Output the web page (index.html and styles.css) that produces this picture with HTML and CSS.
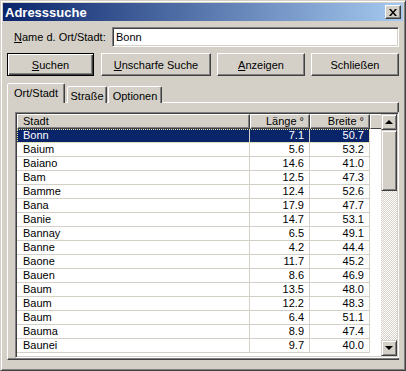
FILE: index.html
```html
<!DOCTYPE html>
<html lang="de">

<head>
    <meta charset="UTF-8" />
    <title>Adresssuche</title>
    <link rel="stylesheet" href="styles.css">
</head>

<body>

    <div class="window">
        <div class="titlebar">
            <span class="title">Adresssuche</span>
            <button class="close-btn">
                <svg width="8" height="7" viewBox="0 0 8 7">
                    <path d="M0 0h2l2 2.5L6 0h2L5 3.5 8 7H6L4 4.5 2 7H0l3-3.5z" fill="#000" />
                </svg>
            </button>
        </div>

        <div class="content">
            <div class="name-row">
                <label class="name-label"><u>N</u>ame d. Ort/Stadt:</label>
                <input class="name-input" type="text" value="Bonn">
            </div>

            <div class="button-row">
                <button class="btn default w-suchen"><u>S</u>uchen</button>
                <button class="btn w-unscharf"><u>U</u>nscharfe Suche</button>
                <button class="btn w-anzeigen"><u>A</u>nzeigen</button>
                <button class="btn w-schliessen">Schließen</button>
            </div>

            <div class="tabs">
                <div class="tab active">Ort/Stadt</div>
                <div class="tab t-strasse">Straße</div>
                <div class="tab t-optionen">Optionen</div>
            </div>

            <div class="panel">
                <div class="list">
                    <div class="grid">
                        <div class="header">
                            <div class="hcell c-stadt">Stadt</div>
                            <div class="hcell c-num">Länge °</div>
                            <div class="hcell c-num">Breite °</div>
                            <div class="hcell c-fill"></div>
                        </div>
                        <div class="row selected"><div class="cell c-stadt">Bonn</div><div class="cell c-num">7.1</div><div class="cell c-num">50.7</div></div>
                        <div class="row"><div class="cell c-stadt">Baium</div><div class="cell c-num">5.6</div><div class="cell c-num">53.2</div></div>
                        <div class="row"><div class="cell c-stadt">Baiano</div><div class="cell c-num">14.6</div><div class="cell c-num">41.0</div></div>
                        <div class="row"><div class="cell c-stadt">Bam</div><div class="cell c-num">12.5</div><div class="cell c-num">47.3</div></div>
                        <div class="row"><div class="cell c-stadt">Bamme</div><div class="cell c-num">12.4</div><div class="cell c-num">52.6</div></div>
                        <div class="row"><div class="cell c-stadt">Bana</div><div class="cell c-num">17.9</div><div class="cell c-num">47.7</div></div>
                        <div class="row"><div class="cell c-stadt">Banie</div><div class="cell c-num">14.7</div><div class="cell c-num">53.1</div></div>
                        <div class="row"><div class="cell c-stadt">Bannay</div><div class="cell c-num">6.5</div><div class="cell c-num">49.1</div></div>
                        <div class="row"><div class="cell c-stadt">Banne</div><div class="cell c-num">4.2</div><div class="cell c-num">44.4</div></div>
                        <div class="row"><div class="cell c-stadt">Baone</div><div class="cell c-num">11.7</div><div class="cell c-num">45.2</div></div>
                        <div class="row"><div class="cell c-stadt">Bauen</div><div class="cell c-num">8.6</div><div class="cell c-num">46.9</div></div>
                        <div class="row"><div class="cell c-stadt">Baum</div><div class="cell c-num">13.5</div><div class="cell c-num">48.0</div></div>
                        <div class="row"><div class="cell c-stadt">Baum</div><div class="cell c-num">12.2</div><div class="cell c-num">48.3</div></div>
                        <div class="row"><div class="cell c-stadt">Baum</div><div class="cell c-num">6.4</div><div class="cell c-num">51.1</div></div>
                        <div class="row"><div class="cell c-stadt">Bauma</div><div class="cell c-num">8.9</div><div class="cell c-num">47.4</div></div>
                        <div class="row"><div class="cell c-stadt">Baunei</div><div class="cell c-num">9.7</div><div class="cell c-num">40.0</div></div>
                    </div>

                    <div class="scrollbar">
                        <div class="sb-btn"><span class="arrow up"></span></div>
                        <div class="sb-track">
                            <div class="sb-thumb"></div>
                        </div>
                        <div class="sb-btn"><span class="arrow down"></span></div>
                    </div>
                </div>
            </div>
        </div>
    </div>

</body>

</html>
```

FILE: styles.css
```css
* {
    box-sizing: border-box;
}

body {
    margin: 0;
    background: #d4d0c8;
    font-family: "Liberation Sans", Arial, sans-serif;
    font-size: 11px;
    color: #000;
}

/* window frame */
.window {
    width: 406px;
    height: 371px;
    background: #d4d0c8;
    border: 1px solid;
    border-color: #d4d0c8 #404040 #404040 #d4d0c8;
    box-shadow: inset 1px 1px #fff, inset -1px -1px #808080;
    padding: 2px;
    display: flex;
    flex-direction: column;
}

.titlebar {
    height: 18px;
    flex: 0 0 18px;
    background: linear-gradient(to right, #0a246a, #a6caf0);
    display: flex;
    align-items: center;
    justify-content: space-between;
    padding: 0 2px 0 2px;
}

.title {
    color: #fff;
    font-weight: bold;
    font-size: 13px;
}

.close-btn {
    width: 16px;
    height: 14px;
    padding: 0;
    margin: 0;
    background: #d4d0c8;
    border: 1px solid;
    border-color: #fff #404040 #404040 #fff;
    box-shadow: inset -1px -1px #808080;
    display: flex;
    align-items: center;
    justify-content: center;
}

.content {
    flex: 1;
    display: flex;
    flex-direction: column;
    padding: 0 4px 8px 4px;
}

/* name field */
.name-row {
    display: flex;
    align-items: center;
    height: 20px;
    margin-top: 6px;
}

.name-label {
    width: 105px;
    padding-left: 7px;
}

.name-input {
    flex: 1;
    height: 20px;
    margin: 0;
    padding: 0 3px;
    font-family: inherit;
    font-size: 11px;
    color: #000;
    background: #fff;
    border: 1px solid;
    border-color: #808080 #fff #fff #808080;
    box-shadow: inset 1px 1px #404040, inset -1px -1px #d4d0c8;
    outline: none;
}

/* buttons */
.button-row {
    display: flex;
    height: 23px;
    margin-top: 6px;
    gap: 6px;
}

.btn {
    height: 23px;
    margin: 0;
    padding: 0;
    font-family: inherit;
    font-size: 11px;
    color: #000;
    background: #d4d0c8;
    border: 1px solid;
    border-color: #fff #404040 #404040 #fff;
    box-shadow: inset -1px -1px #808080;
}

.btn.default {
    border-color: #000;
    box-shadow: inset 1px 1px #fff, inset -1px -1px #404040, inset -2px -2px #808080;
    margin-right: 1px;
}

.w-suchen {
    width: 87px;
}

.w-unscharf {
    width: 110px;
}

.w-anzeigen {
    width: 88px;
}

.w-schliessen {
    width: 88px;
}

/* tabs */
.tabs {
    display: flex;
    align-items: flex-end;
    height: 20px;
    margin-top: 7px;
    margin-bottom: -1px;
}

.tab {
    position: relative;
    height: 17px;
    display: flex;
    align-items: center;
    justify-content: center;
    background: #d4d0c8;
    border: 1px solid;
    border-bottom: none;
    border-color: #fff #404040 transparent #fff;
    border-radius: 2px 2px 0 0;
    box-shadow: inset -1px 0 #808080;
    padding-top: 1px;
}

.tab.active {
    width: 58px;
    height: 20px;
    padding-top: 0;
    padding-bottom: 2px;
    z-index: 1;
}

.tab.t-strasse {
    width: 40px;
    margin-left: 2px;
}

.tab.t-optionen {
    width: 54px;
    margin-left: 1px;
}

.panel {
    flex: 1;
    display: flex;
    border: 1px solid;
    border-color: #fff #404040 #404040 #fff;
    box-shadow: inset -1px -1px #808080;
    padding: 9px 6px 1px 7px;
}

/* list view */
.list {
    flex: 1;
    display: flex;
    background: #fff;
    border: 1px solid;
    border-color: #808080 #fff #fff #808080;
    box-shadow: inset 1px 1px #404040, inset -1px -1px #d4d0c8;
    padding: 1px;
}

.grid {
    flex: 1;
    overflow: hidden;
}

.header {
    display: flex;
    height: 15px;
}

.hcell {
    height: 15px;
    line-height: 13px;
    background: #d4d0c8;
    border: 1px solid;
    border-color: #fff #404040 #404040 #fff;
    box-shadow: inset -1px -1px #808080;
    padding: 0 5px;
    white-space: nowrap;
}

.hcell.c-fill {
    flex: 1;
    border-right: none;
    box-shadow: none;
}

.c-stadt {
    width: 233px;
    text-align: left;
}

.c-num {
    width: 60px;
    text-align: right;
}

.row {
    display: flex;
    width: 353px;
    height: 14px;
}

.cell {
    height: 14px;
    line-height: 13px;
    border-right: 1px solid #d4d0c8;
    border-bottom: 1px solid #d4d0c8;
    padding: 0 5px 0 6px;
    white-space: nowrap;
}

.row.selected {
    outline: 1px dotted #f0eca0;
    outline-offset: -1px;
}

.row.selected .cell {
    background: #0a246a;
    color: #fff;
}

/* scrollbar */
.scrollbar {
    width: 16px;
    display: flex;
    flex-direction: column;
}

.sb-btn,
.sb-thumb {
    background: #d4d0c8;
    border: 1px solid;
    border-color: #d4d0c8 #404040 #404040 #d4d0c8;
    box-shadow: inset 1px 1px #fff, inset -1px -1px #808080;
}

.sb-btn {
    height: 16px;
    display: flex;
    align-items: center;
    justify-content: center;
}

.sb-track {
    flex: 1;
    background: repeating-conic-gradient(#fff 0 25%, #d4d0c8 0 50%) 0 0 / 2px 2px;
}

.sb-thumb {
    height: 61px;
}

.arrow {
    width: 0;
    height: 0;
    border-left: 4px solid transparent;
    border-right: 4px solid transparent;
}

.arrow.up {
    border-bottom: 4px solid #000;
}

.arrow.down {
    border-top: 4px solid #000;
}
```
